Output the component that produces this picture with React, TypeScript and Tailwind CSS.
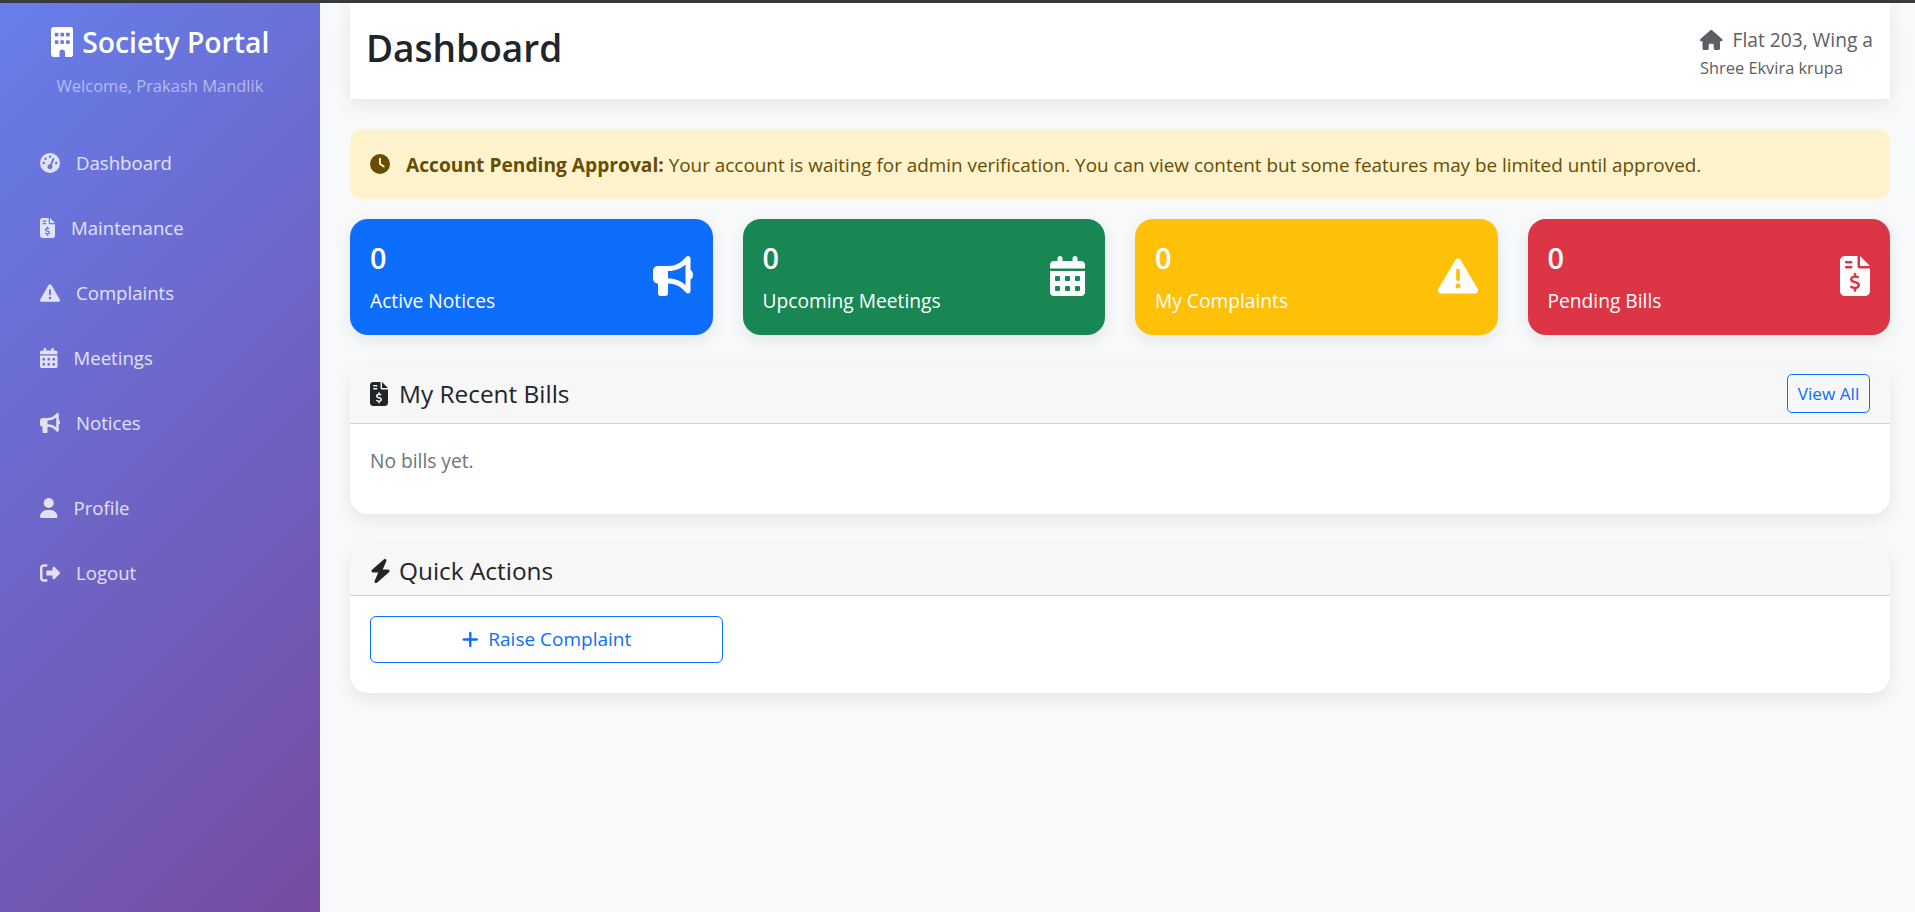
import React from 'react';
import {
  FaBolt,
  FaBuilding,
  FaBullhorn,
  FaCalendarDays,
  FaClock,
  FaFileInvoiceDollar,
  FaGaugeHigh,
  FaHouse,
  FaPlus,
  FaRightFromBracket,
  FaTriangleExclamation,
  FaUser
} from 'react-icons/fa6';

const mainLinks = [
  { label: 'Dashboard', icon: FaGaugeHigh, iconSize: 'w-5' },
  { label: 'Maintenance', icon: FaFileInvoiceDollar, iconSize: 'w-[15px]' },
  { label: 'Complaints', icon: FaTriangleExclamation, iconSize: 'w-5' },
  { label: 'Meetings', icon: FaCalendarDays, iconSize: 'w-[17.5px]' },
  { label: 'Notices', icon: FaBullhorn, iconSize: 'w-5' }
];

const accountLinks = [
  { label: 'Profile', icon: FaUser, iconSize: 'w-[17.5px]' },
  { label: 'Logout', icon: FaRightFromBracket, iconSize: 'w-5' }
];

const stats = [
  { label: 'Active Notices', icon: FaBullhorn, iconSize: 'w-10', bg: 'bg-[#0d6efd]' },
  { label: 'Upcoming Meetings', icon: FaCalendarDays, iconSize: 'w-[35px]', bg: 'bg-[#198754]' },
  { label: 'My Complaints', icon: FaTriangleExclamation, iconSize: 'w-10', bg: 'bg-[#ffc107]' },
  { label: 'Pending Bills', icon: FaFileInvoiceDollar, iconSize: 'w-[30px]', bg: 'bg-[#dc3545]' }
];

const NavLink: React.FC<{ label: string; icon: React.ElementType; iconSize: string }> = ({ label, icon: Icon, iconSize }) => (
  <a className="h-[65px] flex items-center gap-4 pl-10 text-[18.6px] text-white/80">
    <Icon className={`h-5 shrink-0 ${iconSize}`} />
    <span>{label}</span>
  </a>
);

const CardHeader: React.FC<{
  title: string;
  icon: React.ElementType;
  iconSize: string;
  height: string;
  children?: React.ReactNode;
}> = ({ title, icon: Icon, iconSize, height, children }) => (
  <div className={`${height} flex items-center justify-between px-5 bg-[#f7f7f7] border-b border-[#d2d2d2]`}>
    <h5 className="flex items-center gap-[7px] pt-0.5 text-[24.4px] font-medium text-[#212529]">
      <span className="w-[22px]">
        <Icon className={`h-6 ${iconSize}`} />
      </span>
      {title}
    </h5>
    {children}
  </div>
);

export default function App() {
  return (
    <div className="h-[912px] overflow-hidden flex flex-col bg-[#f8f9fa] font-['Open_Sans','Liberation_Sans',sans-serif] text-[#212529]">
      <div className="h-[3px] shrink-0 bg-[#3a3a3a]" />
      <div className="flex flex-1 min-h-0">
        <aside className="w-[320px] shrink-0 bg-[linear-gradient(135deg,#667eea_0%,#764ba2_100%)]">
          <div className="h-[127px] pt-[20px] text-center">
            <h4 className="flex items-center justify-center gap-[9px] text-[28.3px] font-semibold text-white leading-[38px]">
              <FaBuilding className="h-[30px] w-[22.5px]" />
              Society Portal
            </h4>
            <p className="mt-[13px] text-[16.5px] text-white/50">Welcome, Prakash Mandlik</p>
          </div>
          <nav>
            {mainLinks.map((link) => (
              <NavLink key={link.label} {...link} />
            ))}
            <div className="h-5" />
            {accountLinks.map((link) => (
              <NavLink key={link.label} {...link} />
            ))}
          </nav>
        </aside>

        <main className="flex-1 min-w-0 pl-[30px] pr-[25px]">
          <header className="h-[96px] flex justify-between bg-white shadow-[0_6px_18px_rgba(0,0,0,0.08)] pl-4 pr-[15px] pt-5">
            <h1 className="text-[37px] font-semibold leading-[50px]">Dashboard</h1>
            <div className="w-[175px] mt-[2px] text-[#5c5f63]">
              <div className="flex items-center gap-[10px] text-[19.2px] leading-[30px] whitespace-nowrap">
                <FaHouse className="h-5 w-[22.5px]" />
                Flat 203, Wing a
              </div>
              <div className="text-[16.4px] leading-[26px] whitespace-nowrap">Shree Ekvira krupa</div>
            </div>
          </header>

          <div className="mt-[30px] h-[70px] flex items-center gap-4 rounded-[12px] bg-[#fff3cd] pl-5 text-[18.9px] text-[#664d03]">
            <FaClock className="h-5 w-5 shrink-0" />
            <p className="pt-0.5">
              <strong className="text-[19.2px] font-bold">Account Pending Approval:</strong> Your account is waiting for
              admin verification. You can view content but some features may be limited until approved.
            </p>
          </div>

          <div className="mt-5 grid grid-cols-4 gap-[30px]">
            {stats.map(({ label, icon: Icon, iconSize, bg }) => (
              <div
                key={label}
                className={`h-[116px] flex items-center justify-between rounded-[18px] px-5 text-white shadow-[0_6px_18px_rgba(0,0,0,0.08)] ${bg}`}
              >
                <div className="pb-px">
                  <div className="text-[28.8px] font-semibold leading-[38px]">0</div>
                  <div className="mt-[11px] text-[19.2px] leading-[26px]">{label}</div>
                </div>
                <Icon className={`h-10 -mt-0.5 ${iconSize}`} />
              </div>
            ))}
          </div>

          <section className="mt-[29px] h-[150px] overflow-hidden rounded-[18px] bg-white shadow-[0_6px_18px_rgba(0,0,0,0.08)]">
            <CardHeader title="My Recent Bills" icon={FaFileInvoiceDollar} iconSize="w-[18px]" height="h-[60px]">
              <button className="h-[39px] w-[83px] rounded-[5px] border border-[#0d6efd] text-[17.2px] text-[#0d6efd]">
                View All
              </button>
            </CardHeader>
            <p className="pl-5 pt-[19px] text-[19.2px] leading-[36px] text-[#6c757d]">No bills yet.</p>
          </section>

          <section className="mt-[31px] h-[148px] overflow-hidden rounded-[18px] bg-white shadow-[0_6px_18px_rgba(0,0,0,0.08)]">
            <CardHeader title="Quick Actions" icon={FaBolt} iconSize="w-[21px]" height="h-[51px]" />
            <div className="pl-5 pt-5">
              <button className="h-[47px] w-[353px] flex items-center justify-center gap-[10px] rounded-[6px] border border-[#0d6efd] text-[19px] text-[#0d6efd]">
                <FaPlus className="h-[19px] w-[16.6px]" />
                Raise Complaint
              </button>
            </div>
          </section>
        </main>
      </div>
    </div>
  );
}
